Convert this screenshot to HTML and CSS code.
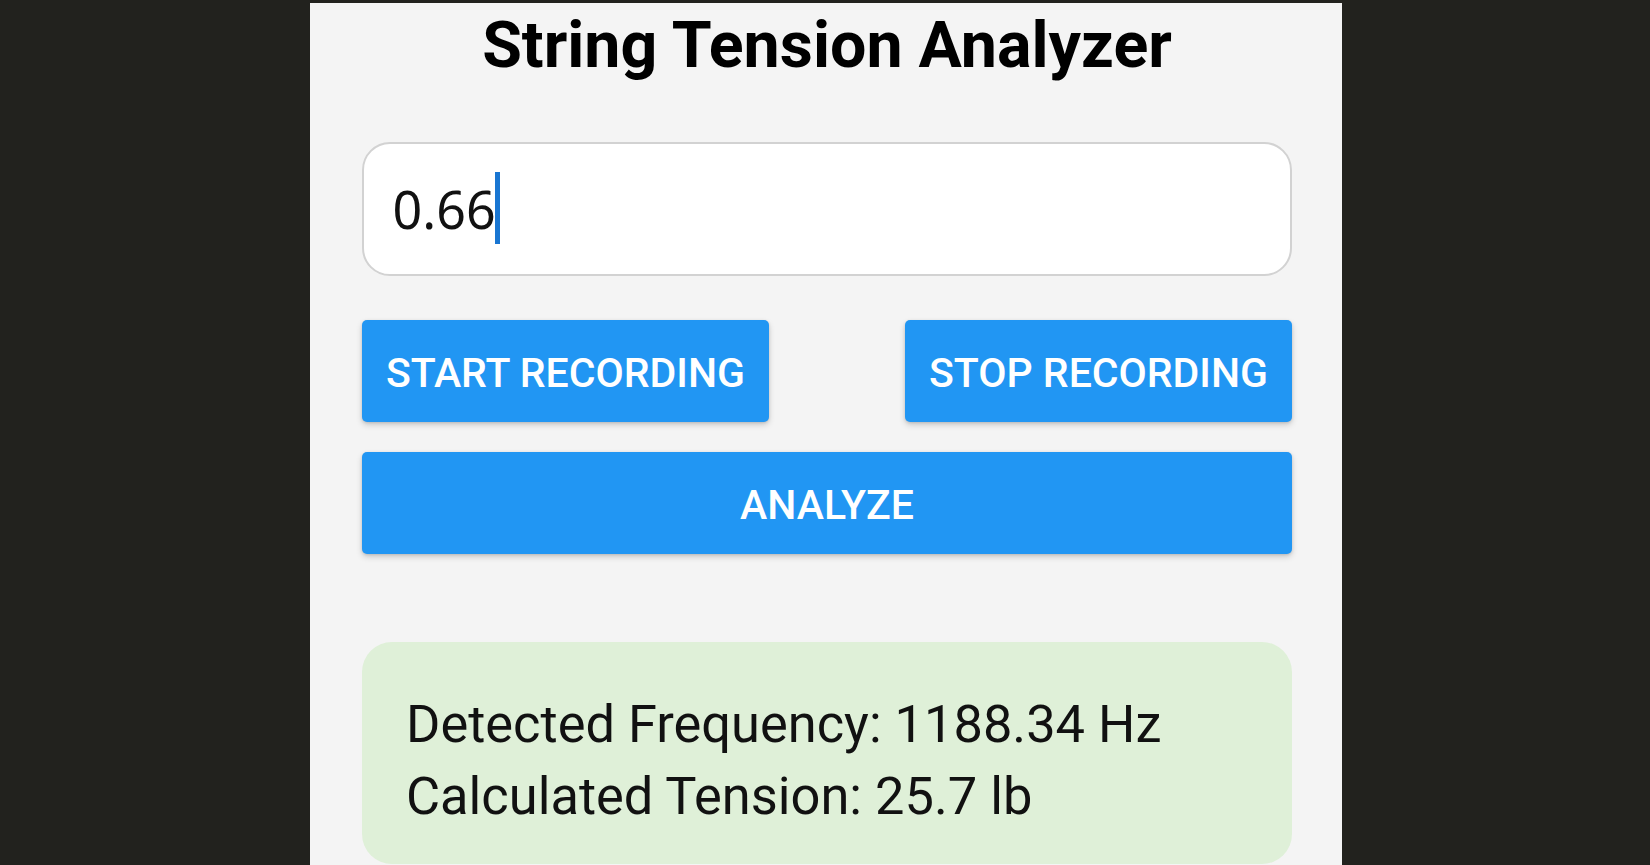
FILE: index.html
```html
<!DOCTYPE html>
<html lang="en">
<head>
<meta charset="utf-8">
<title>String Tension Analyzer</title>
<link rel="stylesheet" href="styles.css">
</head>
<body>
<main class="panel">
  <h1 class="title">String Tension Analyzer</h1>
  <div class="field" role="textbox" aria-label="String gauge"><span class="field-value">0.66</span><span class="caret"></span></div>
  <div class="button-row">
    <button class="btn">START RECORDING</button>
    <button class="btn">STOP RECORDING</button>
  </div>
  <button class="btn btn-wide">ANALYZE</button>
  <section class="result">
    <p class="result-line">Detected Frequency: 1188.34 Hz</p>
    <p class="result-line">Calculated Tension: 25.7 lb</p>
  </section>
</main>
</body>
</html>
```

FILE: styles.css
```css
html, body {
  margin: 0;
  padding: 0;
  height: 100%;
}

body {
  background: #22221e;
  display: flex;
  justify-content: center;
  overflow: hidden;
  font-family: Roboto, "Liberation Sans", sans-serif;
}

.panel {
  box-sizing: border-box;
  width: 1032px;
  margin: 3px 0 0 2px;
  min-height: 862px;
  padding: 5px 50px 0 52px;
  background: #f4f4f4;
  display: flex;
  flex-direction: column;
}

.title {
  margin: 0;
  font-family: Roboto, "Liberation Sans", sans-serif;
  font-weight: 700;
  font-size: 64.5px;
  line-height: 74px;
  color: #000;
  text-align: center;
}

.field {
  box-sizing: border-box;
  margin-top: 60px;
  height: 134px;
  border: 2px solid #d2d2d2;
  border-radius: 28px;
  background: #fff;
  padding-left: 28.5px;
  font-family: "Noto Sans", "Open Sans", sans-serif;
  font-size: 52px;
  line-height: 130px;
  color: #111;
  white-space: nowrap;
}

.caret {
  display: inline-block;
  width: 5px;
  height: 72px;
  margin-left: -1px;
  background: #1976d2;
  vertical-align: -15px;
}

.button-row {
  margin-top: 44px;
  display: flex;
  justify-content: space-between;
}

.btn {
  box-sizing: border-box;
  height: 102px;
  padding: 5px 24px 0;
  border: none;
  border-radius: 5px;
  background: #2196f3;
  color: #fff;
  font-family: Roboto, "Liberation Sans", sans-serif;
  font-weight: 500;
  font-size: 41px;
  line-height: 97px;
  white-space: nowrap;
  box-shadow: 0 3px 6px rgba(0, 0, 0, 0.16), 0 1px 3px rgba(0, 0, 0, 0.12);
}

.btn-wide {
  margin-top: 30px;
  width: 100%;
}

.result {
  margin-top: 88px;
  padding: 46px 43px 32px 44px;
  border-radius: 30px;
  background: #dff0d8;
}

.result-line {
  margin: 0;
  font-family: Roboto, "Liberation Sans", sans-serif;
  font-size: 52.4px;
  line-height: 72px;
  color: #111;
}
```
